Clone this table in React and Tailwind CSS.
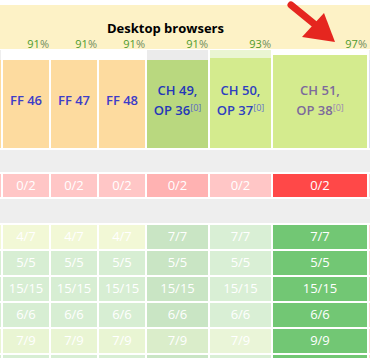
import React from 'react';

const W = ['w-[1px]', 'w-[46px]', 'w-[46px]', 'w-[46px]', 'w-[61px]', 'w-[61px]', 'w-[94px]', 'flex-1'];

const PCT = ['', '91', '91', '91', '91', '93', '97', ''];

// strip above each header cell + the cell itself
const HEADS = [
  { strip: 'h-[10px] bg-[#eeeeee]', cell: 'bg-[#fddb9f]', pad: 'pb-[8px]' },
  { strip: 'h-[10px] bg-white', cell: 'bg-[#fddb9f]', pad: 'pb-[8px]', label: ['FF 46'] },
  { strip: 'h-[10px] bg-white', cell: 'bg-[#fddb9f]', pad: 'pb-[8px]', label: ['FF 47'] },
  { strip: 'h-[10px] bg-white', cell: 'bg-[#fddb9f]', pad: 'pb-[8px]', label: ['FF 48'] },
  { strip: 'h-[10px] bg-[#ebebeb]', cell: 'bg-[#b9d87f]', pad: 'pb-[8px]', label: ['CH 49,', 'OP 36'], color: 'text-[#2436b8]', sup: 'text-[#5a68c8]' },
  { strip: 'h-[8px] bg-[#eaf5d2]', cell: 'bg-[#d4eb8e]', pad: 'pb-[6px]', label: ['CH 50,', 'OP 37'], color: 'text-[#2e40c0]', sup: 'text-[#6270cc]' },
  { strip: 'h-[5px] bg-white', cell: 'bg-[#d4eb8e]', pad: 'pb-[3px]', label: ['CH 51,', 'OP 38'], color: 'text-[#7d6a9c]', sup: 'text-[#9a88b4]' },
  { strip: 'h-[10px] bg-[#eeeeee]', cell: 'bg-[#dcdcf0]', pad: 'pb-[8px]' },
];

const FFG = 'bg-[#d7eed3]';
const FFY = 'bg-[#f2f8d6]';
const FFY2 = 'bg-[#e9f5d3]';
const PINK = 'bg-[#ffd4d4]';

const ROWS = [
  {
    h: 'h-[24px]',
    cells: [
      ['', FFY], ['4/7', FFY], ['4/7', FFY], ['4/7', FFY],
      ['7/7', 'bg-[#c9e5c4]'], ['7/7', 'bg-[#d9efd5]'], ['7/7', 'bg-[#72c774]'], ['', PINK],
    ],
  },
  ...['5/5', '15/15', '6/6'].map((t) => ({
    h: 'h-[24px]',
    cells: [
      ['', FFG], [t, FFG], [t, FFG], [t, FFG],
      [t, 'bg-[#c9e5c4]'], [t, 'bg-[#d9efd5]'], [t, 'bg-[#72c774]'], ['', PINK],
    ],
  })),
  {
    h: 'h-[24px]',
    cells: [
      ['', FFY2], ['7/9', FFY2], ['7/9', FFY2], ['7/9', FFY2],
      ['7/9', 'bg-[#daedca]'], ['7/9', 'bg-[#eaf5d8]'], ['9/9', 'bg-[#72c774]'], ['', PINK],
    ],
  },
  {
    h: 'h-[24px]',
    cells: [
      ['', FFG], ['', FFG], ['', FFG], ['', FFG],
      ['', 'bg-[#c9e5c4]'], ['', 'bg-[#d9efd5]'], ['', 'bg-[#72c774]'], ['', PINK],
    ],
  },
];

const Row = ({ h, cells }) => (
  <div className={`flex gap-[2px] ${h}`}>
    {cells.map(([t, bg], i) => (
      <div key={i} className={`${W[i]} ${bg} flex items-center justify-center text-white text-[13px] shrink-0`}>
        {t}
      </div>
    ))}
  </div>
);

const App = () => (
  <div className="relative w-[370px] h-[358px] overflow-hidden bg-white font-['Open_Sans',sans-serif]">
    <div className="h-[5px]" />
    {/* header band */}
    <div className="h-[44px] bg-[#fdf2c6] flex flex-col">
      <div className="pl-[107px] pt-[14px] h-[32px] text-[13px] leading-[18px] font-bold text-black">
        Desktop browsers
      </div>
      <div className="flex gap-[2px] text-[11px] leading-[14px]">
        {PCT.map((p, i) => (
          <div key={i} className={`${W[i]} text-right shrink-0`}>
            {p && (
              <>
                <span className="text-[#4e9a2c]">{p}</span>
                <span className="text-[#6f8c5e]">%</span>
              </>
            )}
          </div>
        ))}
      </div>
    </div>

    {/* column heads */}
    <div className="mt-[1px] flex gap-[2px] h-[98px]">
      {HEADS.map((c, i) => (
        <div key={i} className={`${W[i]} flex flex-col shrink-0`}>
          <div className={c.strip} />
          <div className={`flex-1 ${c.cell} ${c.pad} flex flex-col items-center justify-center font-semibold text-[13px] leading-[20px] ${c.color || 'text-[#3d3dc8]'}`}>
            {c.label && c.label.length === 1 && <span>{c.label[0]}</span>}
            {c.label && c.label.length === 2 && (
              <>
                <span>{c.label[0]}</span>
                <span>
                  {c.label[1]}
                  <sup className={`text-[9px] font-normal ${c.sup}`}>[0]</sup>
                </span>
              </>
            )}
          </div>
        </div>
      ))}
    </div>

    <div className="mt-[2px] h-[22px] bg-[#eeeeee]" />
    <div className="mt-[2px]">
      <Row
        h="h-[23px]"
        cells={[
          ['', 'bg-[#ffc6c6]'], ['0/2', 'bg-[#ffc6c6]'], ['0/2', 'bg-[#ffc6c6]'], ['0/2', 'bg-[#ffc6c6]'],
          ['0/2', 'bg-[#ffb2b2]'], ['0/2', 'bg-[#ffc6c6]'], ['0/2', 'bg-[#ff4848]'], ['', PINK],
        ]}
      />
    </div>
    <div className="mt-[2px] h-[24px] bg-[#eeeeee]" />
    <div className="mt-[2px] flex flex-col gap-[2px]">
      {ROWS.map((r, i) => <Row key={i} {...r} />)}
    </div>

    {/* red annotation arrow */}
    <svg className="absolute left-0 top-0 pointer-events-none" width="370" height="60" viewBox="0 0 370 60">
      <line x1="291" y1="5" x2="318" y2="27" stroke="#e5261f" strokeWidth="7" strokeLinecap="round" />
      <polygon points="324,13 335,42 302,37" fill="#e5261f" />
    </svg>
  </div>
);

export default App;
